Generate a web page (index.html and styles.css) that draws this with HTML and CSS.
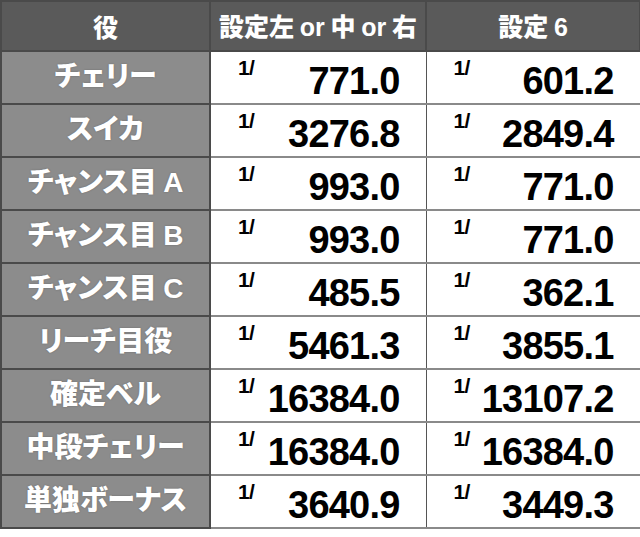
FILE: index.html
```html
<!DOCTYPE html>
<html lang="ja">
<head>
<meta charset="utf-8">
<link rel="stylesheet" href="styles.css">
</head>
<body>
<table class="odds">
  <colgroup><col class="c1"><col class="c2"><col class="c3"></colgroup>
  <thead>
    <tr><th>役</th><th>設定左 <span class="or">or</span> 中 <span class="or">or</span> 右</th><th>設定 <span class="or">6</span></th></tr>
  </thead>
  <tbody>
    <tr><th>チェリー</th><td><div class="v"><span class="f">1/</span><span class="n">771.0</span></div></td><td><div class="v"><span class="f">1/</span><span class="n">601.2</span></div></td></tr>
    <tr><th>スイカ</th><td><div class="v"><span class="f">1/</span><span class="n">3276.8</span></div></td><td><div class="v"><span class="f">1/</span><span class="n">2849.4</span></div></td></tr>
    <tr><th>チャンス目 <span class="or">A</span></th><td><div class="v"><span class="f">1/</span><span class="n">993.0</span></div></td><td><div class="v"><span class="f">1/</span><span class="n">771.0</span></div></td></tr>
    <tr><th>チャンス目 <span class="or">B</span></th><td><div class="v"><span class="f">1/</span><span class="n">993.0</span></div></td><td><div class="v"><span class="f">1/</span><span class="n">771.0</span></div></td></tr>
    <tr><th>チャンス目 <span class="or">C</span></th><td><div class="v"><span class="f">1/</span><span class="n">485.5</span></div></td><td><div class="v"><span class="f">1/</span><span class="n">362.1</span></div></td></tr>
    <tr><th>リーチ目役</th><td><div class="v"><span class="f">1/</span><span class="n">5461.3</span></div></td><td><div class="v"><span class="f">1/</span><span class="n">3855.1</span></div></td></tr>
    <tr><th>確定ベル</th><td><div class="v"><span class="f">1/</span><span class="n">16384.0</span></div></td><td><div class="v"><span class="f">1/</span><span class="n">13107.2</span></div></td></tr>
    <tr><th>中段チェリー</th><td><div class="v"><span class="f">1/</span><span class="n">16384.0</span></div></td><td><div class="v"><span class="f">1/</span><span class="n">16384.0</span></div></td></tr>
    <tr><th>単独ボーナス</th><td><div class="v"><span class="f">1/</span><span class="n">3640.9</span></div></td><td><div class="v"><span class="f">1/</span><span class="n">3449.3</span></div></td></tr>
  </tbody>
</table>
</body>
</html>
```
FILE: styles.css
```css
html, body {
  margin: 0;
  padding: 0;
  background: #ffffff;
}

.odds {
  border-collapse: collapse;
  table-layout: fixed;
  width: 639px;
  font-family: "Noto Sans CJK JP", "Liberation Sans", sans-serif;
}

.c1 { width: 209px; }
.c2 { width: 216px; }
.c3 { width: 214px; }

.odds th,
.odds td {
  padding: 0;
  border: 2px solid #4a4a4a;
}

.odds tbody td {
  border-top-color: #8a8a8a;
  border-bottom-color: #8a8a8a;
  border-left: 1px solid #555555;
  border-right: 1px solid #555555;
}

.odds thead th {
  height: 48px;
  background: #5a5a5a;
  color: #ffffff;
  font-size: 25px;
  font-weight: 900;
  text-align: center;
  vertical-align: middle;
  line-height: 1;
  font-feature-settings: "palt";
}

.odds tbody th {
  padding-top: 8px;
  height: 43px;
  background: #8c8c8c;
  color: #ffffff;
  font-size: 28px;
  font-weight: 900;
  text-align: center;
  vertical-align: top;
  line-height: 1;
  font-feature-settings: "palt";
  text-shadow: 0 0 2px rgba(0, 0, 0, 0.25);
}

.or {
  font-family: "Liberation Sans", sans-serif;
  font-weight: 700;
}

.odds tbody td {
  background: #ffffff;
  vertical-align: top;
}

.v {
  height: 51px;
  display: flex;
  justify-content: space-between;
  align-items: flex-start;
  padding: 0 26px 0 27px;
  font-family: "Liberation Sans", sans-serif;
  font-weight: 700;
  color: #000000;
  line-height: 1;
}

.f {
  font-size: 21px;
  letter-spacing: -0.8px;
  margin-top: 5px;
}

.n {
  font-size: 38px;
  letter-spacing: -0.8px;
  margin-top: 10px;
}
```
